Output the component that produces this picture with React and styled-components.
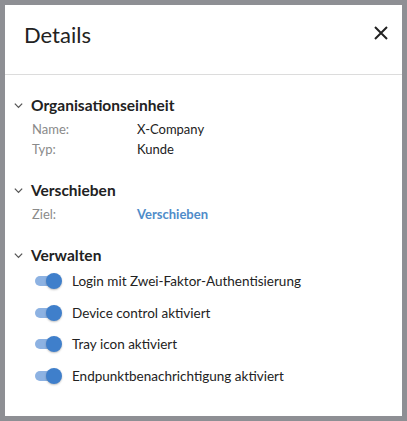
import React from 'react';
import styled, { createGlobalStyle } from 'styled-components';

const GlobalStyle = createGlobalStyle`
    html, body {
        margin: 0;
        padding: 0;
        background: #8e8f94;
    }
    body {
        font-family: Lato, "Noto Sans", sans-serif;
        color: #222;
    }
`

const Frame = styled.div`
    width: 407px;
    height: 421px;
    box-sizing: border-box;
    border: 5px solid #8e8f94;
    background: white;
    overflow: hidden;
`

const Header = styled.div`
    height: 70px;
    box-sizing: border-box;
    display: flex;
    align-items: flex-start;
    justify-content: space-between;
    padding: 16px 11px 0 19px;
    border-bottom: 1px solid #dcdcdc;

    & h1 {
        margin: 0;
        font-size: 22px;
        line-height: 28px;
        font-weight: 400;
        color: #222;
    }
`

const CloseButton = styled.button`
    border: none;
    background: none;
    padding: 0;
    margin-top: 2px;
    width: 20px;
    height: 20px;
    display: flex;
    align-items: center;
    justify-content: center;
    cursor: pointer;
`

const Body = styled.div`
    padding: 19px 0 0 8px;
`

const Section = styled.section`
    margin-bottom: 20px;
`

const SectionTitle = styled.div`
    display: flex;
    align-items: center;
    gap: 7px;
    height: 22px;
    font-size: 15.5px;
    font-weight: 700;
    color: #222;
`

const Rows = styled.div`
    padding: 3px 0 0 19px;
`

const Row = styled.div`
    display: grid;
    grid-template-columns: 105px 1fr;
    height: 20px;
    align-items: center;
    font-size: 13px;
`

const Label = styled.span`
    color: #8a8a8a;
`

const Value = styled.span`
    color: ${props => props.link ? '#4f8cc9' : '#222'};
    font-weight: ${props => props.link ? 700 : 400};
`

const Toggles = styled.div`
    padding: 0 0 0 22px;
    margin-top: -1px;
    display: flex;
    flex-direction: column;
`

const ToggleRow = styled.label`
    display: flex;
    align-items: center;
    gap: 10px;
    height: 31.7px;
    font-size: 13.5px;
    color: #222;
`

const Switch = styled.span`
    position: relative;
    width: 27px;
    height: 16px;
    display: inline-block;
    flex-shrink: 0;

    &::before {
        content: '';
        position: absolute;
        left: 0;
        top: 3px;
        width: 24px;
        height: 10px;
        border-radius: 5px;
        background: #8db2e2;
    }

    &::after {
        content: '';
        position: absolute;
        right: 0;
        top: 0;
        width: 16px;
        height: 16px;
        border-radius: 50%;
        background: #3f7fcb;
        box-shadow: 0 1px 2px rgba(0, 0, 0, 0.25);
    }
`

const Chevron = () => (
    <svg width="11" height="11" viewBox="0 0 12 12" fill="none">
        <path d="M2 4l4 4 4-4" stroke="#555" strokeWidth="1.4" />
    </svg>
);

const toggles = [
    'Login mit Zwei-Faktor-Authentisierung',
    'Device control aktiviert',
    'Tray icon aktiviert',
    'Endpunktbenachrichtigung aktiviert',
];

const App = () => {
    return (
        <>
            <GlobalStyle />
            <Frame>
                <Header>
                    <h1>Details</h1>
                    <CloseButton type='button'>
                        <svg width="14" height="14" viewBox="0 0 14 14">
                            <path d="M1 1l12 12M13 1L1 13" stroke="#222" strokeWidth="2" />
                        </svg>
                    </CloseButton>
                </Header>
                <Body>
                    <Section>
                        <SectionTitle><Chevron />Organisationseinheit</SectionTitle>
                        <Rows>
                            <Row><Label>Name:</Label><Value>X-Company</Value></Row>
                            <Row><Label>Typ:</Label><Value>Kunde</Value></Row>
                        </Rows>
                    </Section>
                    <Section>
                        <SectionTitle><Chevron />Verschieben</SectionTitle>
                        <Rows>
                            <Row><Label>Ziel:</Label><Value link>Verschieben</Value></Row>
                        </Rows>
                    </Section>
                    <Section>
                        <SectionTitle><Chevron />Verwalten</SectionTitle>
                        <Toggles>
                            {toggles.map((text, index) => (
                                <ToggleRow key={index}>
                                    <Switch />
                                    {text}
                                </ToggleRow>
                            ))}
                        </Toggles>
                    </Section>
                </Body>
            </Frame>
        </>
    );
}

export default App;
